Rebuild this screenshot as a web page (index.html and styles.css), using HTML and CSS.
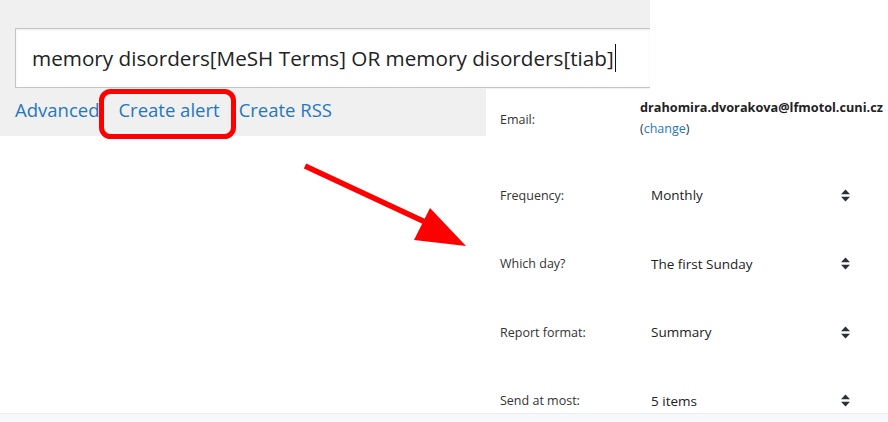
FILE: index.html
```html
<!DOCTYPE html>
<html>
<head>
<meta charset="utf-8">
<link rel="stylesheet" href="styles.css">
</head>
<body>
<div class="page">
  <div class="search-area">
    <div class="search-box">
      <span class="query">memory disorders[MeSH Terms] OR memory disorders[tiab]</span><span class="caret"></span>
    </div>
    <div class="links">
      <a class="link">Advanced</a>
      <a class="link">Create alert</a>
      <a class="link">Create RSS</a>
    </div>
  </div>
  <div class="spacer"></div>
  <div class="footer-band"></div>

  <div class="alert-panel">
    <div class="row email-row">
      <div class="label">Email:</div>
      <div class="email-val">
        <div class="email">drahomira.dvorakova@lfmotol.cuni.cz</div>
        <div class="change">(<a class="change-link">change</a>)</div>
      </div>
    </div>
    <div class="row">
      <div class="label">Frequency:</div>
      <div class="select"><span>Monthly</span><svg class="updown" width="9" height="13" viewBox="0 0 9 13"><polygon points="0,5.3 4.5,0.5 9,5.3"/><polygon points="0,7.7 4.5,12.5 9,7.7"/></svg></div>
    </div>
    <div class="row">
      <div class="label">Which day?</div>
      <div class="select"><span>The first Sunday</span><svg class="updown" width="9" height="13" viewBox="0 0 9 13"><polygon points="0,5.3 4.5,0.5 9,5.3"/><polygon points="0,7.7 4.5,12.5 9,7.7"/></svg></div>
    </div>
    <div class="row">
      <div class="label">Report format:</div>
      <div class="select"><span>Summary</span><svg class="updown" width="9" height="13" viewBox="0 0 9 13"><polygon points="0,5.3 4.5,0.5 9,5.3"/><polygon points="0,7.7 4.5,12.5 9,7.7"/></svg></div>
    </div>
    <div class="row">
      <div class="label">Send at most:</div>
      <div class="select"><span>5 items</span><svg class="updown" width="9" height="13" viewBox="0 0 9 13"><polygon points="0,5.3 4.5,0.5 9,5.3"/><polygon points="0,7.7 4.5,12.5 9,7.7"/></svg></div>
    </div>
  </div>

  <svg class="annotations" width="888" height="422" viewBox="0 0 888 422">
    <rect x="101.5" y="91.5" width="132" height="45" rx="9" ry="9" fill="none" stroke="#ff0000" stroke-width="5"/>
    <line x1="305" y1="166" x2="438" y2="228" stroke="#ff0000" stroke-width="5.5"/>
    <polygon points="430,208 466,246 414,240" fill="#ff0000"/>
  </svg>
</div>
</body>
</html>
```

FILE: styles.css
```css
html, body {
  margin: 0;
  padding: 0;
  background: #ffffff;
}
.page {
  position: relative;
  width: 888px;
  height: 422px;
  overflow: hidden;
  font-family: "Open Sans", "Noto Sans", sans-serif;
  display: flex;
  flex-direction: column;
}
.search-area {
  width: 650px;
  height: 136px;
  background: #f0f0f0;
  padding: 28px 0 0 15px;
  box-sizing: border-box;
  flex: none;
}
.search-box {
  height: 60px;
  background: #ffffff;
  border: 1px solid #c4c4c4;
  border-right: none;
  box-sizing: border-box;
  display: flex;
  align-items: center;
  padding-left: 16px;
  box-shadow: inset 0 1px 2px rgba(0,0,0,0.08);
}
.query {
  font-size: 20.7px;
  color: #222222;
}
.caret {
  display: inline-block;
  width: 1.5px;
  height: 28px;
  background: #111111;
  margin-left: 1px;
}
.links {
  display: flex;
  gap: 19px;
  margin-top: 7px;
}
.link {
  font-size: 18.5px;
  color: #2577bd;
  line-height: 30px;
}
.spacer {
  flex: 1;
}
.footer-band {
  height: 8px;
  background: #f7f8fb;
  border-top: 1px solid #eceef2;
  flex: none;
}
.alert-panel {
  position: absolute;
  left: 486px;
  top: 89px;
  width: 402px;
  height: 324px;
  background: #ffffff;
  padding-left: 14px;
  box-sizing: border-box;
}
.row {
  display: grid;
  grid-template-columns: 140px 1fr;
  align-items: center;
  height: 68.5px;
}
.email-row {
  height: 60px;
  margin-bottom: 12px;
}
.label {
  font-size: 12.5px;
  color: #333333;
}
.email {
  font-size: 12.7px;
  font-weight: 700;
  color: #222222;
  margin-top: -3px;
}
.change {
  font-size: 12.5px;
  color: #333333;
  margin-top: 4px;
}
.change-link {
  color: #2577bd;
}
.select {
  display: flex;
  align-items: center;
  justify-content: space-between;
  padding-left: 11px;
  padding-right: 38px;
  font-size: 13.5px;
  color: #222222;
}
.updown {
  fill: #2b2f36;
}
.annotations {
  position: absolute;
  left: 0;
  top: 0;
  pointer-events: none;
}
```
